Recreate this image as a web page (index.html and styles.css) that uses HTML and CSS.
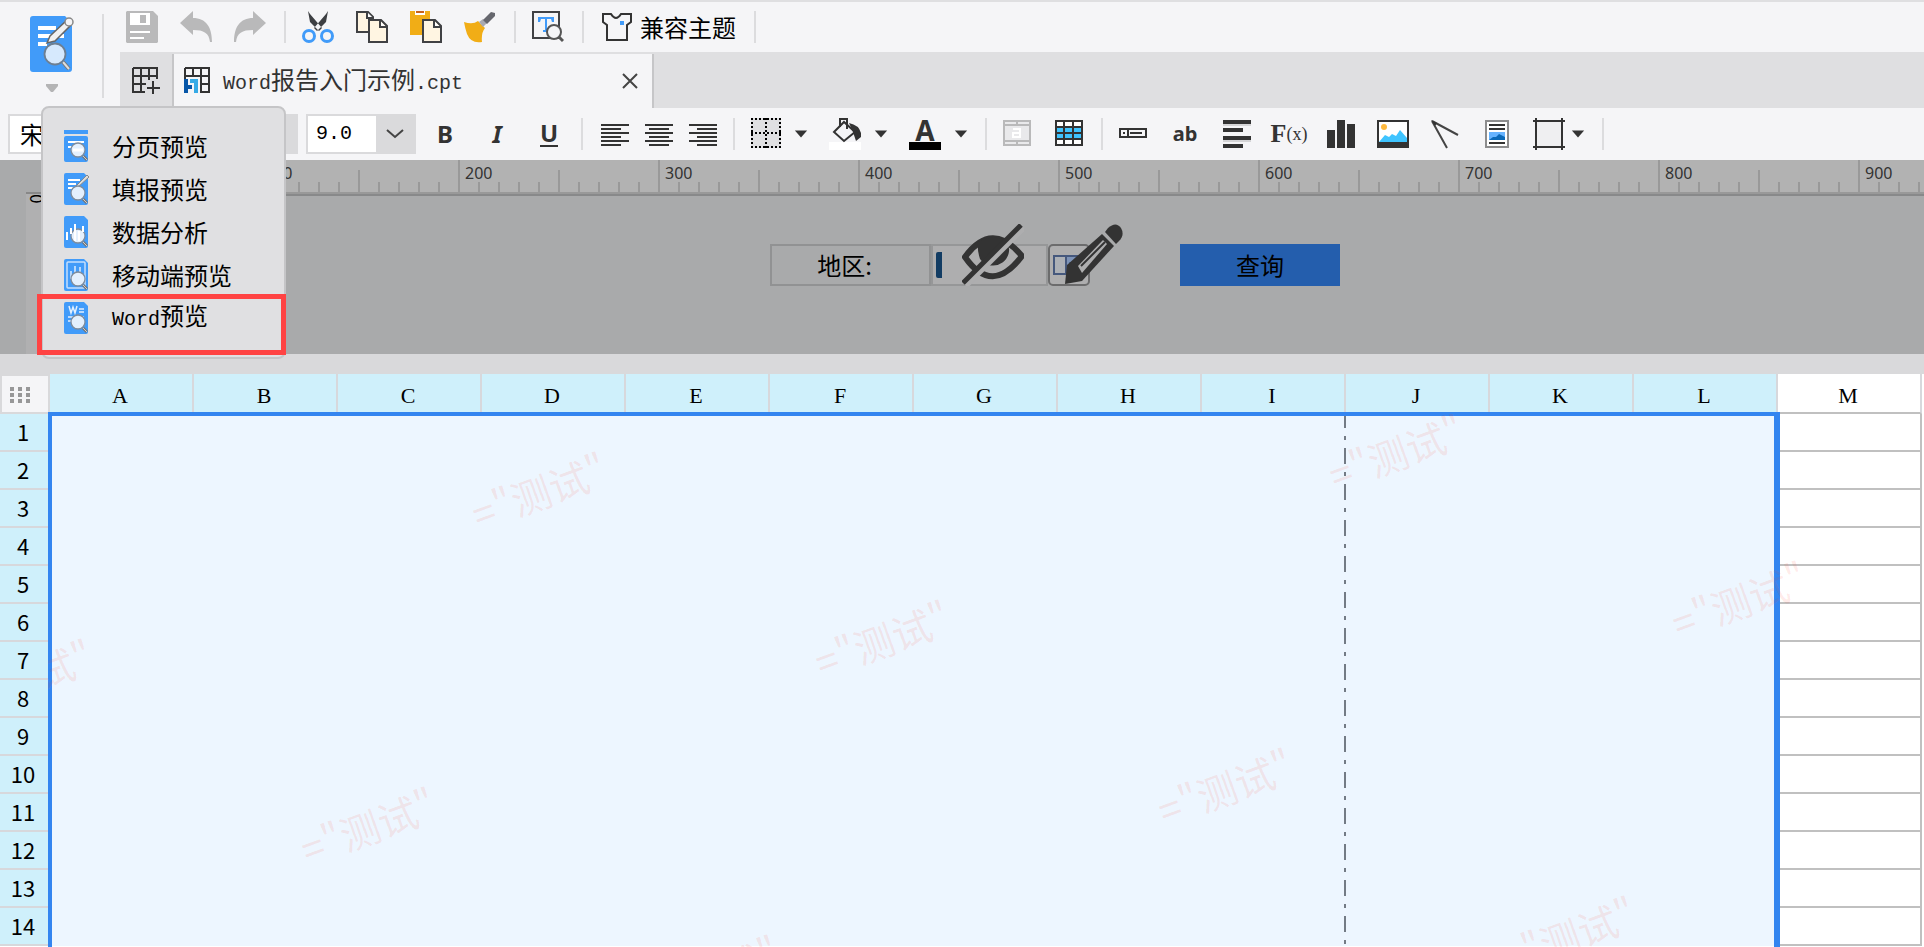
FILE: index.html
```
<!DOCTYPE html>
<html lang="zh-CN">
<head>
  <meta charset="UTF-8">
  <title>Word报告入门示例.cpt</title>
  <meta name="viewport" content="width=device-width, initial-scale=1.0">
  <link rel="stylesheet" href="styles.css">
</head>
<body>

<!-- shared pieces of the preview icons -->
<svg class="defs" aria-hidden="true">
  <symbol id="page" viewBox="0 0 24 32">
    <path d="M2 0H20L24 4V30a2 2 0 0 1-2 2H2a2 2 0 0 1-2-2V2a2 2 0 0 1 2-2z" fill="#419bf9"/>
  </symbol>
  <symbol id="lens" viewBox="0 0 24 32">
    <path d="M19 26l4 4" stroke="#777" stroke-width="3"/>
    <path d="M19 26l4 4" stroke="#ccc" stroke-width="1"/>
    <circle cx="14" cy="20" r="7" fill="#e4f0fd" stroke="#7f8c9c" stroke-width="1.3"/>
  </symbol>
  <symbol id="caret" viewBox="0 0 16 8">
    <path d="M1 0h14l-7 8z" fill="#333"/>
  </symbol>
</svg>

<header class="top">
  <div class="preview">
    <button class="preview-btn" aria-label="预览">
      <svg width="46" height="56" viewBox="0 0 46 56">
        <path d="M3 0H35L42 7V53a3 3 0 0 1-3 3H3a3 3 0 0 1-3-3V3a3 3 0 0 1 3-3z" fill="#419bf9"/>
        <path d="M8 12h18M8 20h26M8 28h9" stroke="#fff" stroke-width="4"/>
        <path d="M17 27l3-7L36 5l5 4-16 16z" fill="#f1f1f1" stroke="#666" stroke-width="1.5"/>
        <circle cx="39" cy="6" r="4" fill="#f4f4f6" stroke="#888" stroke-width="1.5"/>
        <path d="M33 46l6 7" stroke="#777" stroke-width="4"/>
        <path d="M33 46l6 7" stroke="#ddd" stroke-width="2"/>
        <circle cx="25" cy="38" r="10.500" fill="#d6e9fd" stroke="#6d7f92" stroke-width="1.8"/>
      </svg>
      <svg class="preview-caret" width="12" height="8" viewBox="0 0 12 8"><path d="M0 0h12v2L7 8H5L0 2z" fill="#b4b4b5"/></svg>
    </button>

    <div class="menu" role="menu">
      <button role="menuitem">
        <svg width="24" height="32" viewBox="0 0 24 32"><path d="M0 0h24v4H0zM0 8q0-2 2-2h20q2 0 2 2v22q0 2-2 2H2q-2 0-2-2z" fill="#419bf9"/><path d="M1 5h22" stroke="#e0e0e2" stroke-width="2"/><path d="M4 12h16M4 17h10" stroke="#fff" stroke-width="2"/><use href="#lens"/><path d="M9 20h10" stroke="#fff" stroke-width="3"/></svg>
        分页预览
      </button>
      <button role="menuitem">
        <svg width="26" height="32" viewBox="0 0 26 32"><use href="#page" width="24" height="32"/><path d="M4 7h12M4 11h8M4 15h6" stroke="#fff" stroke-width="2"/><path d="M11 14L23 2l2 2-12 11z" fill="#ddd" stroke="#888"/><use href="#lens" width="24" height="32"/></svg>
        填报预览
      </button>
      <button role="menuitem">
        <svg width="24" height="32" viewBox="0 0 24 32"><use href="#page"/><use href="#lens"/><path d="M3 16v8M7 12v6M11 8v8M19 10v6" stroke="#fff" stroke-width="2"/><path d="M11 16v9M15 15v10" stroke="#fff" stroke-width="2"/></svg>
        数据分析
      </button>
      <button role="menuitem">
        <svg width="24" height="32" viewBox="0 0 24 32"><use href="#page"/><rect x="3" y="3" width="18" height="26" rx="1" fill="none" stroke="#c5e0fd" stroke-width="1.500"/><path d="M7 12v8M11 7v8M16 8v8" stroke="#b5d8fd" stroke-width="2"/><use href="#lens"/></svg>
        移动端预览
      </button>
      <button role="menuitem">
        <svg width="24" height="32" viewBox="0 0 24 32"><use href="#page"/><path d="M5 4l2 7 2-6 2 6 2-7M15 7h5M15 10h5M4 15h16M4 19h5" fill="none" stroke="#e3f0fe" stroke-width="1.500"/><use href="#lens"/></svg>
        <span><span class="latin">Word</span>预览</span>
      </button>
    </div>
  </div>

  <div class="actions">
    <button aria-label="保存"><svg viewBox="0 0 32 32"><path d="M1 0h26l5 5v26l-1 1H1l-1-1V1z" fill="#b9b9ba"/><path d="M4 2h20v12H4zM4 20h20v2H4zM4 26h14v2H4z" fill="#fff"/><path d="M14 4h6v8h-6z" fill="#b9b9ba"/></svg></button>
    <button aria-label="撤销"><svg viewBox="0 0 32 32"><path d="M0 12L13 0v7c13 0 19 9 19 24h-2c-1-9-6-12-17-12v5z" fill="#b9b9ba"/></svg></button>
    <button aria-label="重做"><svg viewBox="0 0 32 32"><path d="M32 12L19 0v7C6 7 0 16 0 31h2c1-9 6-12 17-12v5z" fill="#b9b9ba"/></svg></button>
    <i class="sep"></i>
    <button aria-label="剪切"><svg viewBox="0 0 32 32"><path d="M6 0l2 3 12 14-3 3L8 11zM26 0l-2 3-12 14 3 3 9-9z" fill="#3d3f42"/><circle cx="7" cy="25" r="5.500" fill="none" stroke="#419bf9" stroke-width="3"/><circle cx="25" cy="25" r="5.500" fill="none" stroke="#419bf9" stroke-width="3"/></svg></button>
    <button aria-label="复制"><svg viewBox="0 0 32 32"><path d="M1 1h11l5 5v15H1z" fill="#fff5e2" stroke="#404144" stroke-width="2"/><path d="M11 1v6h6" fill="#fff" stroke="#404144" stroke-width="2"/><path d="M13 9h12l6 6v16H13z" fill="#fff5e2" stroke="#404144" stroke-width="2"/><path d="M24 10v6h6" fill="#fff" stroke="#404144" stroke-width="2"/></svg></button>
    <button aria-label="粘贴"><svg viewBox="0 0 32 32"><path d="M0 0h20v24H0z" fill="#f1ad16"/><path d="M5 0h10v4H5z" fill="#fff"/><path d="M6 0h8v2H6z" fill="#c96219"/><path d="M13 9h12l6 6v16H13z" fill="#fff5e2" stroke="#404144" stroke-width="2"/><path d="M24 10v6h6" fill="#fff" stroke="#404144" stroke-width="2"/></svg></button>
    <button aria-label="格式刷"><svg viewBox="0 0 32 32"><path d="M0 11q9 3 14-1l7 7q-4 5-3 14-11 2-15-8-2-6-3-12z" fill="#f1ad16"/><path d="M15 11l4-3 4 4-4 4z" fill="#a8a9b0"/><path d="M19 9l8-8 4 1v3l-8 8z" fill="#66676e"/></svg></button>
    <i class="sep"></i>
    <button aria-label="查找"><svg viewBox="0 0 32 32"><path d="M1 1h26v26H1z" fill="#f5f5f7" stroke="#404144" stroke-width="2"/><path d="M6 6h16v5h-2l-1-3h-4v11h2v2h-6v-2h2V8H9l-1 3H6z" fill="#419bf9"/><circle cx="22" cy="21" r="7" fill="#f5f5f7" stroke="#555" stroke-width="2"/><path d="M27 26l4 4" stroke="#555" stroke-width="3"/></svg></button>
    <i class="sep"></i>
    <button class="theme"><svg viewBox="0 0 32 32"><path d="M3 3h8q5 8 10 0h10v8l-4 3v15H7V14l-4-3z" fill="#f5f5f7" stroke="#333" stroke-width="2"/><path d="M20 10h4v4h-4z" fill="#419bf9"/></svg>兼容主题</button>
    <i class="sep"></i>
  </div>

  <div class="tabs">
    <button class="tab-add" aria-label="新建"><svg viewBox="0 0 28 28"><path d="M1 1h24v11M25 9H1M25 1v11M1 1v24h12M9 1v24M17 1v12M1 17h13M15 21h13M21 14v13" fill="none" stroke="#333" stroke-width="2"/></svg></button>
    <div class="tab">
      <svg viewBox="0 0 28 28"><path d="M1 1h24v24h-9M1 12V1M1 9h24M9 1v8M17 1v24M17 17h8" fill="none" stroke="#333" stroke-width="2"/><path d="M0 12h4v6h4v4H4v4H0z" fill="#0756a8"/><path d="M6 12h8v14h-4V16H6z" fill="#36aae6"/></svg>
      <span class="tab-name"><span class="latin">Word</span>报告入门示例<span class="latin">.cpt</span></span>
      <button aria-label="关闭"><svg width="16" height="16" viewBox="0 0 16 16"><path d="M1 1l14 14M15 1L1 15" stroke="#444" stroke-width="2"/></svg></button>
    </div>
  </div>
</header>

<div class="format">
  <div class="combo combo-font">
    <input type="text" value="宋体" aria-label="字体">
    <button aria-label="选择字体"><svg width="18" height="10" viewBox="0 0 18 10"><path d="M1 1l8 7 8-7" fill="none" stroke="#444" stroke-width="2"/></svg></button>
  </div>
  <div class="combo combo-size">
    <input class="latin" type="text" value="9.0" aria-label="字号">
    <button aria-label="选择字号"><svg width="18" height="10" viewBox="0 0 18 10"><path d="M1 1l8 7 8-7" fill="none" stroke="#444" stroke-width="2"/></svg></button>
  </div>

  <div class="group style">
    <button><b>B</b></button>
    <button><b><em>I</em></b></button>
    <button><b class="underline">U</b></button>
  </div>
  <i class="sep"></i>

  <div class="group align">
    <button aria-label="左对齐"><svg viewBox="0 0 32 32"><path d="M4 7h28M4 11h20M4 15h28M4 19h20M4 23h28M4 27h20" stroke="#333" stroke-width="2"/></svg></button>
    <button aria-label="居中"><svg viewBox="0 0 32 32"><path d="M4 7h28M8 11h20M4 15h28M8 19h20M4 23h28M8 27h20" stroke="#333" stroke-width="2"/></svg></button>
    <button aria-label="右对齐"><svg viewBox="0 0 32 32"><path d="M4 7h28M12 11h20M4 15h28M12 19h20M4 23h28M12 27h20" stroke="#333" stroke-width="2"/></svg></button>
  </div>
  <i class="sep"></i>

  <div class="group">
    <div class="split">
      <button aria-label="边框"><svg viewBox="0 0 32 32"><path d="M2 0h30v30H2z" fill="#e0e0e2"/><path d="M2 1h30M2 15h30M2 29h30M3 0v30M17 0v30M31 0v30" stroke="#000" stroke-width="2" stroke-dasharray="2 2"/></svg></button>
      <button class="arrow" aria-label="边框样式"><svg><use href="#caret"/></svg></button>
    </div>
    <div class="split">
      <button aria-label="填充颜色"><svg viewBox="0 0 32 32"><path d="M0 24h32v8H0z" fill="#fff"/><path d="M5 14L15 4l11 10-11 9z" fill="#f5f5f7" stroke="#333" stroke-width="2"/><path d="M11 9V1h7v10" fill="none" stroke="#333" stroke-width="2"/><path d="M20 5q10 2 12 10v4l-5 4-3-9z" fill="#333"/></svg></button>
      <button class="arrow" aria-label="选择填充颜色"><svg><use href="#caret"/></svg></button>
    </div>
    <div class="split">
      <button class="color">A</button>
      <button class="arrow" aria-label="选择文字颜色"><svg><use href="#caret"/></svg></button>
    </div>
  </div>
  <i class="sep"></i>

  <div class="group">
    <button aria-label="合并单元格"><svg viewBox="0 0 32 32"><path d="M3 3h26v24H3zM3 7h26M3 23h26M16 3v4M16 23v4" fill="#e9e9eb" stroke="#b9b9ba" stroke-width="2"/><path d="M12 11h7v8h-7v-4h6" fill="none" stroke="#fff" stroke-width="2"/></svg></button>
    <button aria-label="表格"><svg viewBox="0 0 32 32"><path d="M3 3h26v24H3z" fill="#fff"/><path d="M3 9h26v12H3z" fill="#3fc4ff"/><path d="M3 3h26v24H3zM3 9h26M3 15h26M3 21h26M11 3v24M20 3v24" fill="none" stroke="#333" stroke-width="2"/></svg></button>
  </div>
  <i class="sep"></i>

  <div class="group">
    <button aria-label="文本框"><svg viewBox="0 0 32 32"><path d="M3 11h26v8H3zM11 11v8M13 15h12M6 15h2" fill="none" stroke="#333" stroke-width="2"/></svg></button>
    <button class="ab">ab</button>
    <button aria-label="富文本"><svg viewBox="0 0 32 32"><path d="M2 6h28M2 22h28" stroke="#d5d5d7" stroke-width="4"/><path d="M2 4h28M2 12h20M2 20h28M2 28h20" stroke="#333" stroke-width="4"/></svg></button>
    <button class="fx"><b>F</b>(x)</button>
    <button aria-label="图表"><svg viewBox="0 0 32 32"><path d="M2 12h8v18H2zM12 2h8v28h-8zM22 6h8v24h-8z" fill="#333"/></svg></button>
    <button aria-label="图片"><svg viewBox="0 0 32 32"><path d="M1 3h30v26H1z" fill="#fff" stroke="#333" stroke-width="2"/><path d="M2 24l6-7 4 2 3-3 4 2 4-6 7 8v5H2z" fill="#3fc4ff"/><path d="M1 24h30v5H1z" fill="#333"/><circle cx="7" cy="9" r="3" fill="#ffb93d"/></svg></button>
    <button aria-label="斜线"><svg viewBox="0 0 32 32"><path d="M3 3l26 14M3 3l15 27" stroke="#444" stroke-width="2"/><path d="M2 2l6 3-2 3z" fill="#333"/></svg></button>
    <button aria-label="子报表"><svg viewBox="0 0 32 32"><path d="M5 3h22v26H5z" fill="#fff" stroke="#8d8d8e" stroke-width="2"/><path d="M8 7h16M8 11h16M8 25h16" stroke="#333" stroke-width="2"/><path d="M8 14h16v8H8z" fill="#66b3ff"/><path d="M8 22l4-3h3l3-3 6 3v3z" fill="#0b69b8"/></svg></button>
    <div class="split tight">
      <button aria-label="悬浮元素"><svg viewBox="0 0 32 32"><path d="M3 3h26v26H3z" fill="#efeff1"/><path d="M0 3h32M0 29h32M3 0v32M29 0v32" stroke="#333" stroke-width="2"/></svg></button>
      <button class="arrow" aria-label="选择悬浮元素"><svg><use href="#caret"/></svg></button>
    </div>
  </div>
  <i class="sep"></i>
</div>

<section class="pane">
  <div class="ruler-x" id="rulerX"></div>
  <div class="ruler-y"><span>0</span></div>
  <form class="params" onsubmit="return false">
    <label for="area">地区:</label>
    <div class="field">
      <input type="text" id="area">
      <svg class="eye" width="62" height="62" viewBox="0 0 62 62">
        <path d="M3 33Q30-4 60 32Q30 72 3 33z" fill="none" stroke="#333" stroke-width="6"/>
        <path d="M16 18q14-8 28-2a16 16 0 1 1-26 19q-3-9-2-17z" fill="#333"/>
        <path d="M4 62L62 4" stroke="#aeaeaf" stroke-width="5"/>
        <path d="M1 59L59 1" stroke="#333" stroke-width="5"/>
      </svg>
    </div>
    <button class="widget" aria-label="编辑控件">
      <svg width="32" height="20" viewBox="0 0 32 20"><path d="M1 1h30v18H1zM13 1v18" fill="#acb0b6" stroke="#45587d" stroke-width="2"/><path d="M14 2h16v16H14z" fill="#7d93b7"/><path d="M16 7h12l-6 7z" fill="#234f91"/></svg>
      <svg class="pencil" width="62" height="62" viewBox="0 0 62 62">
        <path d="M2 60l2-19L39 10l12 12-32 35z" fill="#333"/>
        <path d="M15 42l25-26 4 4-25 29z" fill="#aeaeaf"/>
        <path d="M18 42l24-24" stroke="#333" stroke-width="2"/>
        <path d="M42 8l3-4q8-7 13 0 4 7-2 13l-3 3z" fill="#333"/>
      </svg>
    </button>
    <button class="query">查询</button>
  </form>
</section>

<main class="sheet">
  <table>
    <thead>
      <tr id="columns">
        <th class="corner" aria-label="全选"><svg width="20" height="16" viewBox="0 0 20 16"><path d="M0 0h4v4H0zM8 0h4v4H8zM16 0h4v4h-4zM0 6h4v4H0zM8 6h4v4H8zM16 6h4v4h-4zM0 12h4v4H0zM8 12h4v4H8zM16 12h4v4h-4z" fill="#979798"/></svg></th>
      </tr>
    </thead>
    <tbody id="rows"></tbody>
  </table>
  <div class="selection"><svg class="page-break" width="2" height="100%"><path d="M1 0V2000" stroke="#737b85" stroke-width="2" stroke-dasharray="12 8 4 8 4 0"/></svg></div>
  <div class="watermarks" id="watermarks"></div>
</main>

<script>
const columns = "ABCDEFGHIJKLM".split("");
const selected = 12;

columns.forEach((name, i) => {
  const th = document.createElement("th");
  th.textContent = name;
  if (i < selected) th.className = "on";
  document.getElementById("columns").appendChild(th);
});

for (let r = 1; r <= 14; r++) {
  const tr = document.createElement("tr");
  tr.innerHTML = "<th>" + r + "</th>" +
    columns.map((c, i) => i < selected ? '<td class="on"></td>' : "<td></td>").join("");
  document.getElementById("rows").appendChild(tr);
}

for (let n = 0; n < 10; n++) {
  const span = document.createElement("span");
  span.textContent = n * 100;
  document.getElementById("rulerX").appendChild(span);
}

// watermark lattice, tilted like the text
for (let a = -2; a < 5; a++) {
  for (let b = -2; b < 3; b++) {
    const x = 425 + a * 343 - b * 171;
    const y = 81 + a * 148 + b * 335;
    if (x < -150 || x > 1900 || y < 10 || y > 660) continue;
    const mark = document.createElement("span");
    mark.textContent = '="测试"';
    mark.style.left = x + "px";
    mark.style.top = y + "px";
    document.getElementById("watermarks").appendChild(mark);
  }
}
</script>

</body>
</html>
```
FILE: styles.css
```
* {
  box-sizing: border-box;
}
html {
  height: 100%;
}
body {
  margin: 0;
  height: 100%;
  display: flex;
  flex-direction: column;
  overflow: hidden;
  background: #f5f5f7;
  color: #000;
  font-family: "Noto Sans CJK SC", sans-serif;
  font-size: 24px;
  line-height: 32px;
}
button, input {
  font: inherit;
  color: inherit;
  padding: 0;
  margin: 0;
  border: none;
  background: none;
}
button {
  display: flex;
  align-items: center;
  justify-content: center;
  flex: none;
}
svg {
  display: block;
  flex: none;
}
.defs {
  position: absolute;
  width: 0;
  height: 0;
}
.latin {
  font-family: "Liberation Mono", monospace;
  font-size: 20px;
}
.sep {
  width: 2px;
  height: 32px;
  background: #dcdcde;
  flex: none;
}

/* header */
.top {
  display: grid;
  grid-template-columns: 120px 1fr;
  grid-template-rows: 50px 56px;
  border-top: 2px solid #dfdfe1;
  flex: none;
}
.preview {
  position: relative;
  grid-row: 1 / 3;
  padding: 12px 16px 10px 30px;
}
.preview-btn {
  flex-direction: column;
  align-items: flex-start;
  justify-content: flex-start;
  width: 74px;
  height: 84px;
  padding-top: 2px;
  gap: 12px;
  border-right: 2px solid #dcdcde;
}
.preview-caret {
  margin-left: 16px;
}
.menu {
  position: absolute;
  z-index: 5;
  left: 41px;
  top: 104px;
  width: 245px;
  padding: 16px 0 18px;
  background: #e0e0e2;
  border: 2px solid #c5c5c7;
  border-radius: 8px;
}
.menu button {
  width: 100%;
  height: 43px;
  padding-left: 21px;
  gap: 24px;
  justify-content: flex-start;
}
.menu svg {
  margin-right: -2px;
}
.menu svg[width="24"] {
  margin-right: 0;
}
.menu::after {
  content: "";
  box-sizing: border-box;
  position: absolute;
  left: -6px;
  right: -2px;
  bottom: 2px;
  height: 61px;
  border: 5px solid #ff4343;
}
.actions {
  display: flex;
  align-items: center;
  gap: 22px;
  padding-left: 6px;
}
.actions svg {
  width: 32px;
  height: 32px;
}
.actions .sep {
  margin: 0 -6px 0 -4px;
}
.actions .theme {
  gap: 8px;
}
.tabs {
  display: flex;
  background: #dfdfe1;
  border-top: 2px solid #dfdfe1;
}
.tabs svg {
  width: 28px;
  height: 28px;
}
.tab-add {
  width: 52px;
}
.tab {
  display: flex;
  align-items: center;
  width: 482px;
  padding: 0 14px 0 10px;
  gap: 11px;
  background: #f5f5f7;
  color: #333;
  border: solid #c6c6c8;
  border-width: 0 2px;
}
.tab-name {
  flex: 1;
}
.tab button svg {
  width: 16px;
  height: 16px;
}

/* format bar */
.format {
  display: flex;
  align-items: center;
  height: 52px;
  padding-left: 8px;
  flex: none;
  color: #333;
}
.combo {
  display: flex;
  height: 40px;
  margin-right: 8px;
  border: 2px solid #dadadc;
  background: #dadadc;
  color: #000;
}
.combo input {
  flex: 1;
  min-width: 0;
  padding-left: 8px;
  background: #fff;
}
.combo button {
  width: 38px;
}
.combo-font {
  width: 290px;
}
.combo-font input {
  padding-left: 10px;
}
.combo-size {
  width: 110px;
}
.format .sep {
  margin: 0 14px 0 16px;
}
.group {
  display: flex;
  gap: 20px;
}
.group button {
  width: 32px;
  height: 32px;
}
.group svg {
  width: 32px;
  height: 32px;
}
.group.style {
  margin-left: 5px;
  font-family: "Noto Sans", sans-serif;
}
.group.align {
  gap: 12px;
}
.underline {
  line-height: 24px;
  border-bottom: 2px solid #333;
}
.split {
  display: flex;
  gap: 12px;
}
.split.tight {
  gap: 5px;
}
.group .arrow {
  width: 16px;
}
.group .arrow svg {
  width: 14px;
  height: 8px;
}
.group .color {
  font-family: "Noto Sans", sans-serif;
  font-size: 28px;
  font-weight: bold;
  line-height: 24px;
  border-bottom: 8px solid #000;
}
.ab {
  font-family: "Noto Sans", sans-serif;
  font-size: 20px;
  font-weight: bold;
}
.fx {
  font-family: "Liberation Serif", serif;
  font-size: 18px;
}
.fx b {
  font-size: 26px;
}

/* parameter pane */
.pane {
  display: grid;
  grid-template-columns: 26px 32px 1fr;
  grid-template-rows: 36px 158px;
  background: #a9aaab;
  border-bottom: 20px solid #d9d9db;
  flex: none;
}
.ruler-x {
  grid-column: 3;
  display: flex;
  overflow: hidden;
  border-bottom: 2px solid #88898a;
  background:
    linear-gradient(#999, #999) 0 32px / 100% 2px no-repeat,
    repeating-linear-gradient(90deg, #999 0 2px, transparent 2px 200px) 0 0 / 100% 32px no-repeat,
    repeating-linear-gradient(90deg, #999 0 2px, transparent 2px 100px) 0 10px / 100% 22px no-repeat,
    repeating-linear-gradient(90deg, #999 0 2px, transparent 2px 20px) 0 22px / 100% 10px no-repeat,
    #b2b2b2;
}
.ruler-x span {
  flex: none;
  width: 200px;
  padding-left: 7px;
  font-family: "Noto Sans", sans-serif;
  font-size: 16px;
  line-height: 26px;
  color: #333;
}
.ruler-y {
  grid-column: 2;
  margin-top: -4px;
  background: #b0b0b1;
  border-top: 2px solid #888;
  border-right: 2px solid #999;
}
.ruler-y span {
  display: block;
  writing-mode: vertical-rl;
  transform: rotate(180deg);
  font-size: 17px;
  line-height: 20px;
}
.params {
  display: flex;
  align-items: flex-start;
  grid-column: 3;
  padding-top: 48px;
  padding-left: 712px;
  line-height: 38px;
}
.params label {
  width: 161px;
  padding-right: 12px;
  text-align: center;
  border: 2px solid #919293;
}
.field {
  position: relative;
  width: 117px;
  height: 42px;
  padding: 6px 3px;
  border: 2px solid #969798;
  background: #aeaeaf;
}
.field input {
  display: block;
  width: 100%;
  height: 26px;
  border-left: 6px solid #123c63;
  border-radius: 2px;
}
.eye {
  position: absolute;
  left: 29px;
  top: -22px;
}
.params .widget {
  position: relative;
  width: 42px;
  height: 42px;
  border: 2px solid #6c6c6d;
  border-radius: 5px;
  background: #aeaeaf;
}
.pencil {
  position: absolute;
  left: 13px;
  top: -22px;
}
.query {
  width: 160px;
  height: 42px;
  margin-left: 90px;
  background: #245ead;
}

/* sheet */
.sheet {
  position: relative;
  flex: 1;
  min-height: 0;
  overflow: hidden;
  background: #fff;
}
table {
  table-layout: fixed;
  width: 1922px;
  border-collapse: separate;
  border-spacing: 0;
}
th {
  height: 38px;
  padding: 0 2px 3px 0;
  font-size: 22px;
  font-weight: normal;
  line-height: 32px;
  background: #cff0fb;
  border-right: 2px solid #d7d8dc;
  border-bottom: 2px solid #d7d8dc;
}
td {
  padding: 0;
  border-right: 2px solid #c0c0c0;
  border-bottom: 2px solid #c0c0c0;
}
td.on {
  background: #edf6ff;
  border-color: #edf6ff;
}
thead th {
  height: 40px;
  width: 144px;
  padding: 6px 2px 0 0;
  font-family: "Liberation Serif", serif;
  background: #fff;
  border-bottom-color: #c0c0c0;
}
thead th.on {
  background: #cff0fb;
}
thead .corner {
  width: 50px;
  padding: 2px 0 0 8px;
  background: #f5f5f7;
  border: 2px solid #d9d9db;
}
.selection {
  position: absolute;
  left: 48px;
  top: 38px;
  width: 1732px;
  height: 2000px;
  border: 4px solid #3385f0;
  border-right-width: 6px;
}
.page-break {
  margin-left: 1292px;
}
.watermarks {
  position: absolute;
  left: 48px;
  top: 40px;
  right: 0;
  bottom: 0;
  overflow: hidden;
}
.watermarks span {
  position: absolute;
  font-size: 40px;
  line-height: 40px;
  white-space: nowrap;
  color: rgba(255, 60, 40, 0.1);
  transform: rotate(-20deg);
  transform-origin: left center;
}
```
